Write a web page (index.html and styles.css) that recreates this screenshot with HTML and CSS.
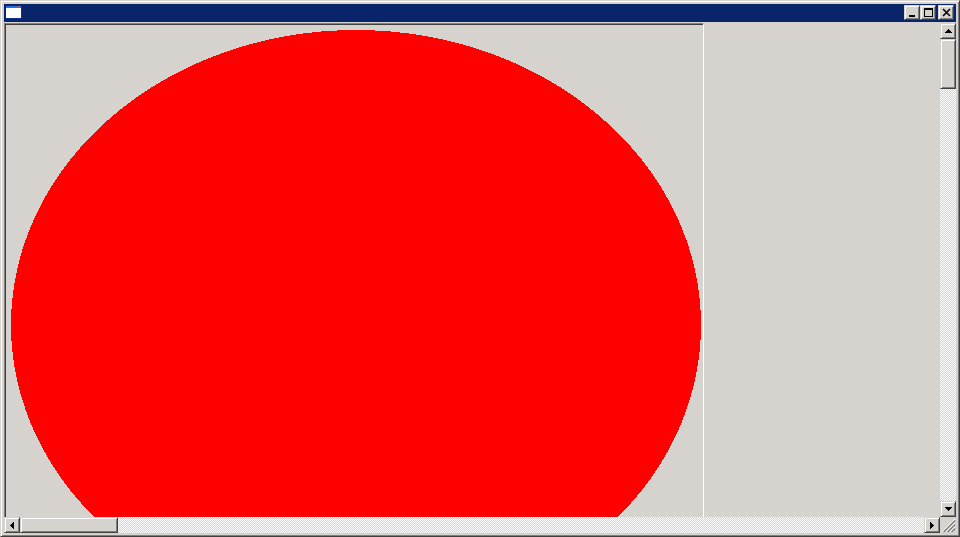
FILE: index.html
```html
<!DOCTYPE html>
<html lang="en">
<head>
  <meta charset="UTF-8" />
  <title>Window</title>
  <link rel="stylesheet" href="styles.css">
</head>
<body>
  <div class="window">
    <div class="titlebar">
      <svg class="app-icon" width="16" height="13" viewBox="0 0 16 13" shape-rendering="crispEdges">
        <rect width="16" height="13" fill="#0f2f8c"/>
        <rect width="15" height="2" fill="#2a6fe0"/>
        <rect x="12" width="2" height="1" fill="#e05050"/>
        <rect y="2" width="15" height="10" fill="#fff"/>
      </svg>
      <div class="caption-buttons">
        <div class="btn caption-btn"><svg width="9" height="9" viewBox="0 0 9 9" shape-rendering="crispEdges"><rect x="1" y="7" width="6" height="2"/></svg></div>
        <div class="btn caption-btn"><svg width="9" height="9" viewBox="0 0 9 9" shape-rendering="crispEdges"><path d="M0 0h9v9h-9z M1 2v6h7v-6z" fill-rule="evenodd"/></svg></div>
        <div class="btn caption-btn close"><svg width="9" height="9" viewBox="0 0 9 9"><path d="M1 1l7 7M8 1l-7 7" stroke="#000" stroke-width="1.6" fill="none"/></svg></div>
      </div>
    </div>
    <div class="client">
      <div class="canvas-row">
        <div class="canvas">
          <div class="canvas-inner">
            <svg class="drawing" width="697" height="492" viewBox="0 0 697 492" shape-rendering="crispEdges">
              <ellipse cx="350" cy="300" rx="345" ry="295" fill="#f00"/>
            </svg>
          </div>
        </div>
        <div class="side-panel"></div>
        <div class="vscroll">
          <div class="btn arrow-btn"><svg width="7" height="4" viewBox="0 0 7 4" shape-rendering="crispEdges"><path d="M3 0h1v1h1v1h1v1h1v1H0V3h1V2h1V1h1z"/></svg></div>
          <div class="btn vthumb"></div>
          <div class="track"></div>
          <div class="btn arrow-btn"><svg width="7" height="4" viewBox="0 0 7 4" shape-rendering="crispEdges"><path d="M0 0h7v1H6v1H5v1H4v1H3V3H2V2H1V1H0z"/></svg></div>
        </div>
      </div>
      <div class="hscroll">
        <div class="btn arrow-btn"><svg width="4" height="7" viewBox="0 0 4 7" shape-rendering="crispEdges"><path d="M3 0h1v7H3V6H2V5H1V4H0V3h1V2h1V1h1z"/></svg></div>
        <div class="btn hthumb"></div>
        <div class="track"></div>
        <div class="btn arrow-btn"><svg width="4" height="7" viewBox="0 0 4 7" shape-rendering="crispEdges"><path d="M0 0h1v1h1v1h1v1h1v1H3v1H2v1H1v1H0z"/></svg></div>
        <div class="grip">
          <svg width="16" height="16" viewBox="0 0 16 16">
            <path d="M15 3.5L3.5 15M15 7.5L7.5 15M15 11.5L11.5 15" stroke="#808080" stroke-width="1.6" fill="none"/>
            <path d="M15 2L2 15M15 6L6 15M15 10L10 15" stroke="#fff" stroke-width="1" fill="none"/>
          </svg>
        </div>
      </div>
    </div>
  </div>
</body>
</html>
```

FILE: styles.css
```css
html, body { margin: 0; height: 100%; overflow: hidden; }
body { background: #d6d3ce; }

.window {
  width: 960px; height: 537px; box-sizing: border-box;
  display: flex; flex-direction: column;
  background: #d6d3ce;
  padding: 3px;
  border: 1px solid #d6d3ce;
  border-right-color: #404040; border-bottom-color: #404040;
  box-shadow: inset 1px 1px 0 #fff, inset -1px -1px 0 #808080;
}

.titlebar {
  height: 18px; flex: none; background: #0a246a;
  display: flex; justify-content: space-between;
  padding: 0 2px; margin-bottom: 1px; box-sizing: border-box;
}
.app-icon { display: block; margin-top: 2px; }
.caption-buttons { display: flex; padding-top: 1px; }
.close { margin-left: 2px; }

.btn {
  box-sizing: border-box; background: #d6d3ce;
  display: flex; align-items: center; justify-content: center;
  border: 1px solid #d6d3ce;
  border-right-color: #404040; border-bottom-color: #404040;
  box-shadow: inset 1px 1px 0 #fff, inset -1px -1px 0 #808080;
}
.caption-btn { width: 16px; height: 15px; }

.client { flex: 1; display: flex; flex-direction: column; min-height: 0; }
.canvas-row { flex: 1; display: flex; min-height: 0; }

.canvas {
  width: 700px; flex: none; box-sizing: border-box; overflow: hidden;
  border-top: 1px solid #808080; border-left: 1px solid #808080;
  border-right: 1px solid #fff;
}
.canvas-inner { height: 100%; box-sizing: border-box; border-top: 1px solid #404040; border-left: 1px solid #404040; }
.drawing { display: block; }
.side-panel { flex: 1; }

.vscroll { width: 16px; flex: none; display: flex; flex-direction: column; }
.arrow-btn { width: 16px; height: 16px; flex: none; }
.vthumb { height: 50px; flex: none; }
.track {
  flex: 1;
  background: conic-gradient(#fff 25%, #d6d3ce 0 50%, #fff 0 75%, #d6d3ce 0) 0 0 / 2px 2px;
}

.hscroll { height: 16px; flex: none; display: flex; }
.hthumb { width: 98px; flex: none; }
.grip { width: 16px; flex: none; }
.grip svg { display: block; }
```
